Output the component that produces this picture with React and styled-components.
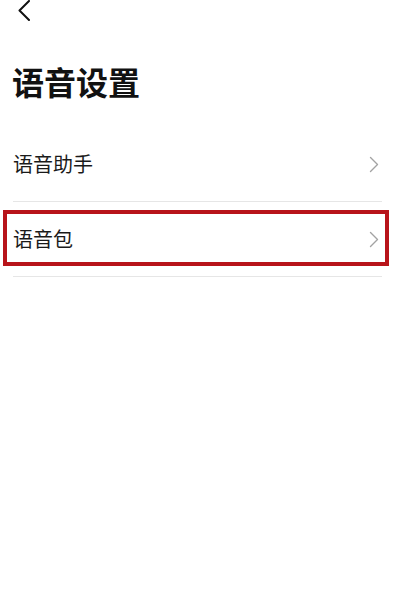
import React from "react";
import styled, { createGlobalStyle } from "styled-components";

const Global = createGlobalStyle`
  html, body { margin: 0; padding: 0; background: #fff; }
  body { font-family: "Noto Sans CJK SC", "Noto Sans", sans-serif; }
`;

const Page = styled.div`
  width: 400px;
  min-height: 593px;
  background: #fff;
  display: flex;
  flex-direction: column;
`;

const BackBar = styled.div`
  height: 22px;
  padding-left: 17px;
  display: flex;
  align-items: flex-start;
`;

const Title = styled.h1`
  margin: 39px 0 0 0;
  padding-left: 12px;
  font-size: 32px;
  line-height: 40px;
  font-weight: 700;
  color: #111;
  letter-spacing: 0;
`;

const List = styled.div`
  margin: 26px 18px 0 13px;
  display: flex;
  flex-direction: column;
`;

const Row = styled.div`
  position: relative;
  height: 74px;
  border-bottom: 1px solid #e6e6e6;
  display: flex;
  align-items: center;
  justify-content: space-between;
`;

const Label = styled.span`
  font-size: 20px;
  line-height: 24px;
  color: #1a1a1a;
`;

const Chevron = styled.span`
  display: flex;
  padding-right: 3px;
`;

const Highlight = styled.div`
  position: absolute;
  top: 8px;
  left: -10px;
  right: -7px;
  height: 56px;
  box-sizing: border-box;
  border: 4px solid #b8141a;
  pointer-events: none;
`;

const BackIcon = () => (
  <svg width="14" height="21" viewBox="0 0 14 21">
    <path d="M12 1 L2.5 10.5 L12 20" fill="none" stroke="#111" strokeWidth="2" strokeLinecap="round" strokeLinejoin="round" />
  </svg>
);

const RightIcon = () => (
  <svg width="10" height="17" viewBox="0 0 10 17">
    <path d="M1.5 1.5 L8.5 8.5 L1.5 15.5" fill="none" stroke="#a3a3a3" strokeWidth="1.4" strokeLinecap="round" strokeLinejoin="round" />
  </svg>
);

const items = [
  { label: "语音助手", highlighted: false },
  { label: "语音包", highlighted: true },
];

export default function App() {
  return (
    <Page>
      <Global />
      <BackBar>
        <BackIcon />
      </BackBar>
      <Title>语音设置</Title>
      <List>
        {items.map((it) => (
          <Row key={it.label}>
            <Label>{it.label}</Label>
            <Chevron>
              <RightIcon />
            </Chevron>
            {it.highlighted && <Highlight />}
          </Row>
        ))}
      </List>
    </Page>
  );
}
